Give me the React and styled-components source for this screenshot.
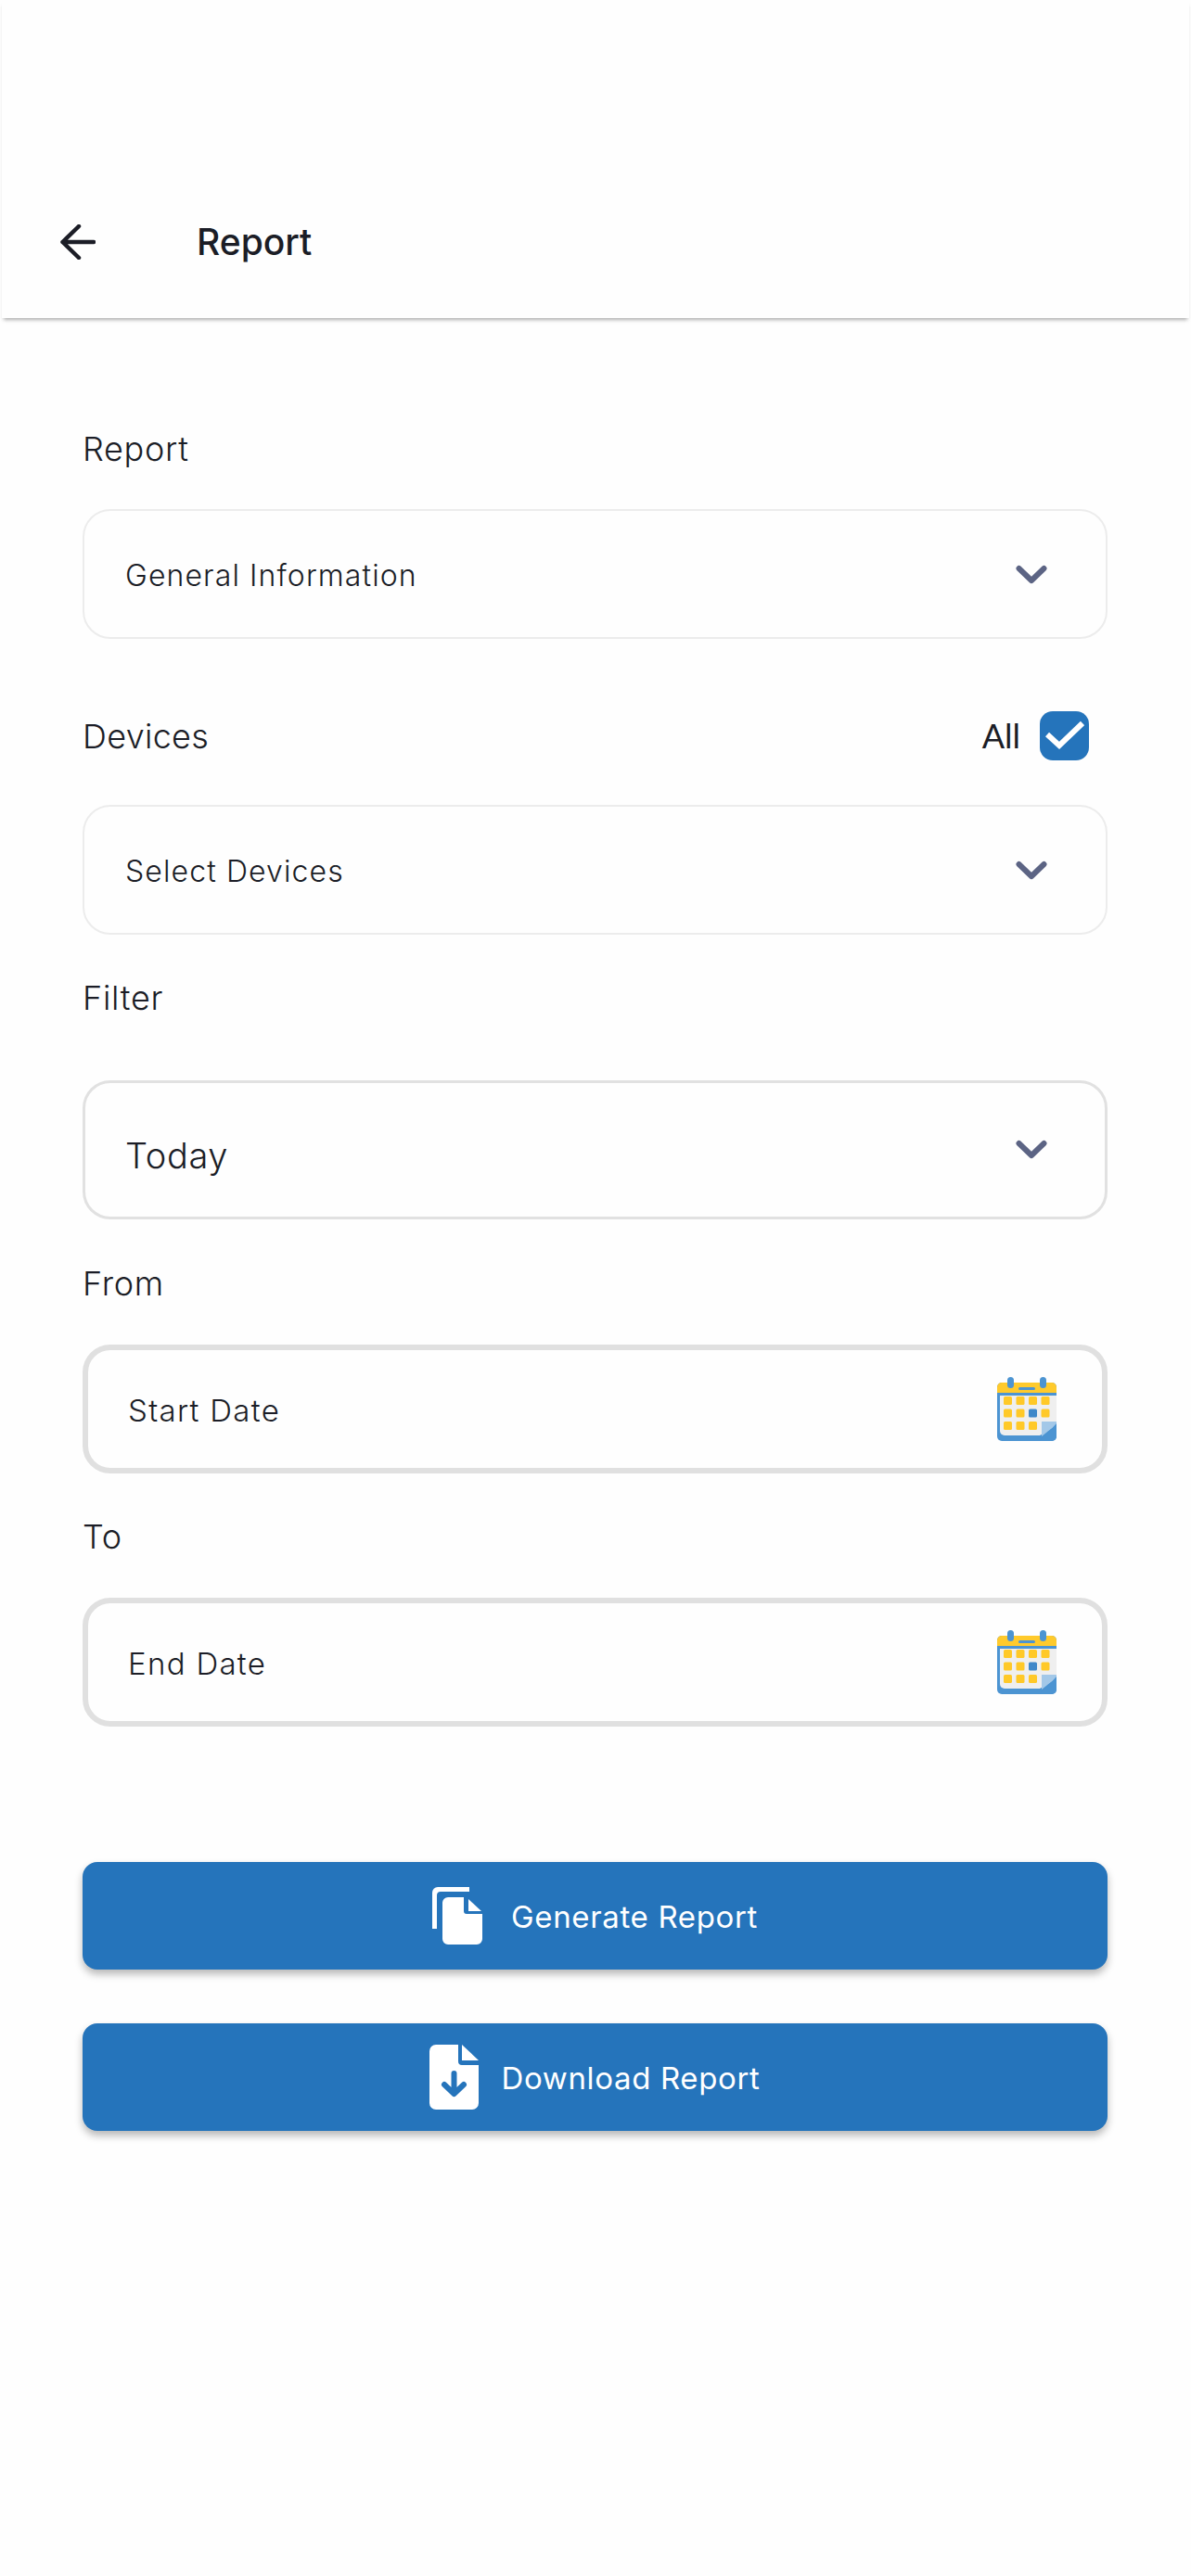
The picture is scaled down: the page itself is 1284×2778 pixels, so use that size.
import React from "react";
import styled, { createGlobalStyle } from "styled-components";

const GlobalStyle = createGlobalStyle`
  html, body {
    margin: 0;
    background: #fefefe;
    font-family: "Inter", "Liberation Sans", sans-serif;
    color: #1b1d26;
  }
`;

const Page = styled.div`
  width: 1284px;
  height: 2778px;
  overflow: hidden;
`;

const Header = styled.header`
  height: 343px;
  margin: 0 2px;
  padding: 0 63px;
  box-sizing: border-box;
  display: flex;
  align-items: flex-end;
  background: #fefefe;
  box-shadow: 0 4px 4px -2px rgba(0, 0, 0, 0.32);
`;

const BackButton = styled.div`
  width: 148px;
  height: 38px;
  margin-bottom: 63px;
`;

const Title = styled.h1`
  margin: 0 0 58px -1px;
  font-size: 39px;
  line-height: 48px;
  font-weight: 500;
  letter-spacing: 0;
`;

const Form = styled.main`
  padding: 0 90px 0 89px;
  display: flex;
  flex-direction: column;
`;

const Label = styled.div`
  height: 44px;
  margin-top: ${(p) => p.$top}px;
  margin-bottom: ${(p) => p.$bottom}px;
  font-size: 36px;
  line-height: 44px;
  font-weight: 300;
  letter-spacing: 0.7px;
`;

const LabelRow = styled.div`
  height: 52px;
  margin-top: 78px;
  margin-bottom: 49px;
  padding-right: 20px;
  display: flex;
  align-items: center;
  font-size: 36px;
  font-weight: 300;
  letter-spacing: 0.3px;
`;

const RowTitle = styled.span`
  position: relative;
  top: 1px;
`;

const AllText = styled.span`
  margin-left: auto;
  margin-right: 21px;
  font-family: "Lato", sans-serif;
  font-size: 36px;
  font-weight: 400;
  letter-spacing: 0;
`;

const CheckBox = styled.div`
  width: 53px;
  height: 53px;
  border-radius: 14px;
  background: #2574bb;
  display: flex;
  align-items: center;
  justify-content: center;
`;

const Box = styled.div`
  box-sizing: border-box;
  height: ${(p) => p.$height}px;
  display: flex;
  align-items: center;
  justify-content: space-between;
  padding: 0 ${(p) => p.$right}px 0 ${(p) => p.$left}px;
  border: ${(p) => p.$border}px solid ${(p) => p.$color};
  border-radius: 30px;
  background: #fefefe;
  font-size: ${(p) => p.$font}px;
  font-weight: 300;
  letter-spacing: ${(p) => p.$spacing}px;
`;

const BoxText = styled.span`
  position: relative;
  top: ${(p) => p.$shift || 0}px;
`;

const Chevron = styled.svg`
  position: relative;
  top: ${(p) => p.$shift || 0}px;
  width: 34px;
  height: 22px;
`;

const Spacer = styled.div`
  height: ${(p) => p.$size}px;
`;

const ActionButton = styled.button`
  width: 100%;
  height: 116px;
  border: none;
  border-radius: 16px;
  background: #2574bb;
  color: #ffffff;
  font-family: inherit;
  font-size: 33px;
  font-weight: 400;
  letter-spacing: 0.65px;
  box-shadow: 0 5px 8px rgba(0, 0, 0, 0.28);
  display: flex;
  align-items: center;
  justify-content: center;
  gap: ${(p) => p.$gap}px;
`;

const ButtonText = styled.span`
  position: relative;
  top: 1px;
`;

const ArrowLeft = () => (
  <svg width="38" height="38" viewBox="0 0 38 38" fill="none" stroke="#1b1d26" strokeWidth="4.5" strokeLinecap="round" strokeLinejoin="round">
    <path d="M36 19H2.5M20 2 2.5 19 20 36" />
  </svg>
);

const ChevronDown = ({ shift }) => (
  <Chevron $shift={shift} viewBox="0 0 34 22" fill="none" stroke="#5c6484" strokeWidth="6" strokeLinecap="round" strokeLinejoin="round">
    <path d="M3.5 4 17 17 30.5 4" />
  </Chevron>
);

const Calendar = () => (
  <svg width="64" height="69" viewBox="0 0 64 69">
    <rect x="0" y="6" width="64" height="63" rx="5" fill="#4c94d2" />
    <path d="M3 20H64V52L46 63H8a5 5 0 0 1-5-5z" fill="#efefef" />
    <path d="M0 11a5 5 0 0 1 5-5h54a5 5 0 0 1 5 5v6H0z" fill="#ffca2c" />
    <rect x="11" y="0" width="7" height="12" rx="3.5" fill="#4c94d2" />
    <rect x="46" y="0" width="7" height="12" rx="3.5" fill="#4c94d2" />
    <rect x="23" y="11" width="18" height="3" rx="1.5" fill="#4c94d2" />
    {[0, 1, 2, 3].map((c) =>
      [0, 1, 2].map((r) =>
        c === 3 && r === 2 ? null : (
          <rect
            key={`${c}-${r}`}
            x={7 + c * 13.5}
            y={21 + r * 13.5}
            width="9"
            height="9"
            rx="1.5"
            fill={c === 2 && r === 1 ? "#3f88c9" : "#ffc928"}
          />
        )
      )
    )}
    <path d="M48 48h16v3L48 64z" fill="#a3c8e8" />
    <path d="M64 50v14a5 5 0 0 1-5 5H46l18-19z" fill="#4c94d2" />
  </svg>
);

const CopyFile = () => (
  <svg width="54" height="62" viewBox="0 0 54 62" fill="#ffffff">
    <path d="M0 45V6a6 6 0 0 1 6-6h34v5H9a4 4 0 0 0-4 4v36z" />
    <path d="M11 17a6 6 0 0 1 6-6h17v15a3 3 0 0 0 3 3h17v27a6 6 0 0 1-6 6H17a6 6 0 0 1-6-6z" />
    <path d="M39 13l14 13H39z" />
  </svg>
);

const DownloadFile = () => (
  <svg width="53" height="70" viewBox="0 0 53 70">
    <path d="M7 0h24v18a4 4 0 0 0 4 4h18v41a7 7 0 0 1-7 7H7a7 7 0 0 1-7-7V7a7 7 0 0 1 7-7z" fill="#ffffff" />
    <path d="M35 0l18 17H35z" fill="#ffffff" />
    <path d="M26.5 31v20M16 43l10.5 10L37 43" fill="none" stroke="#2574bb" strokeWidth="6" strokeLinecap="round" strokeLinejoin="round" />
  </svg>
);

const Check = () => (
  <svg width="42" height="32" viewBox="0 0 42 32" fill="none" stroke="#ffffff" strokeWidth="6">
    <path d="M2 15 15 27 40 3" />
  </svg>
);

const App = () => (
  <Page>
    <GlobalStyle />
    <Header>
      <BackButton>
        <ArrowLeft />
      </BackButton>
      <Title>Report</Title>
    </Header>
    <Form>
      <Label $top={119} $bottom={43}>Report</Label>
      <Box $height={140} $border={2} $color="#ececec" $left={44} $right={63} $font={32} $spacing={1.1}>
        <BoxText $shift={1}>General Information</BoxText>
        <ChevronDown shift={1} />
      </Box>
      <LabelRow>
        <RowTitle>Devices</RowTitle>
        <AllText>All</AllText>
        <CheckBox>
          <Check />
        </CheckBox>
      </LabelRow>
      <Box $height={140} $border={2} $color="#ececec" $left={44} $right={63} $font={32} $spacing={1.1}>
        <BoxText $shift={1}>Select Devices</BoxText>
        <ChevronDown shift={1} />
      </Box>
      <Label $top={46} $bottom={67}>Filter</Label>
      <Box $height={150} $border={3} $color="#e1e1e1" $left={43} $right={62} $font={38} $spacing={0.6}>
        <BoxText $shift={6}>Today</BoxText>
        <ChevronDown />
      </Box>
      <Label $top={47} $bottom={44}>From</Label>
      <Box $height={139} $border={6} $color="#e0e0e0" $left={43} $right={49} $font={33} $spacing={1.3}>
        <BoxText $shift={1}>Start Date</BoxText>
        <Calendar />
      </Box>
      <Label $top={46} $bottom={44}>To</Label>
      <Box $height={139} $border={6} $color="#e0e0e0" $left={43} $right={49} $font={33} $spacing={1.3}>
        <BoxText $shift={1}>End Date</BoxText>
        <Calendar />
      </Box>
      <Spacer $size={146} />
      <ActionButton $gap={31}>
        <CopyFile />
        <ButtonText>Generate Report</ButtonText>
      </ActionButton>
      <Spacer $size={58} />
      <ActionButton $gap={24}>
        <DownloadFile />
        <ButtonText>Download Report</ButtonText>
      </ActionButton>
    </Form>
  </Page>
);

export default App;
